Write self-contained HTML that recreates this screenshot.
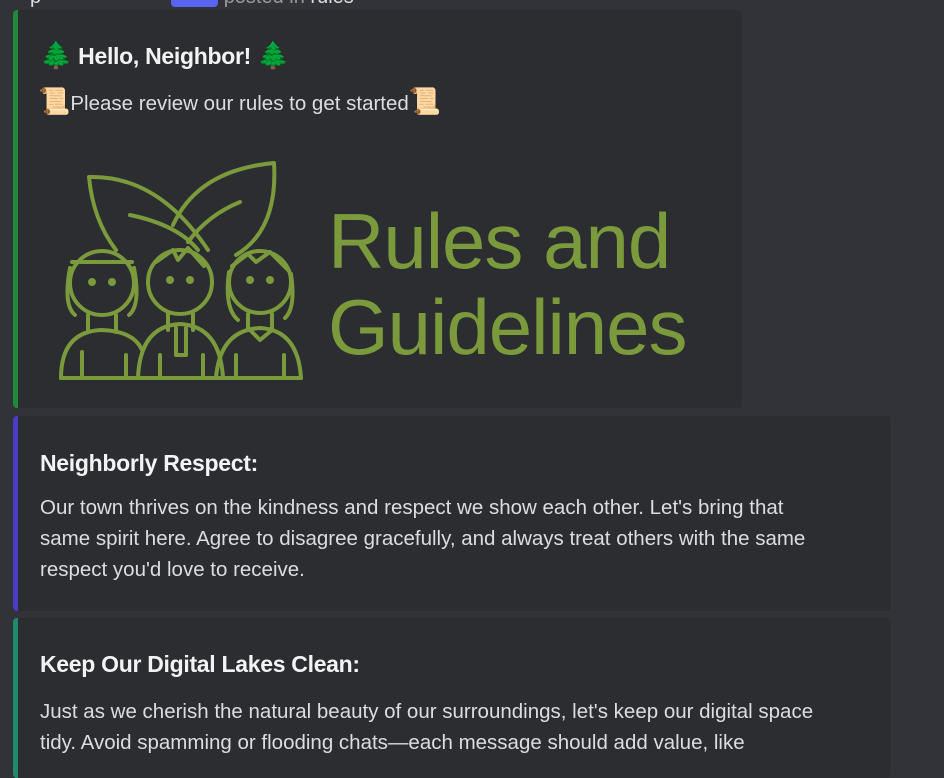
<!DOCTYPE html>
<html><head><meta charset="utf-8"><style>
body{margin:0;width:944px;height:743px;overflow:hidden;background:#313338;font-family:"Liberation Sans",sans-serif;color:#dbdee1;position:relative}
.embed{position:absolute;left:13px;background:#2b2d31;border-radius:4px;border-left:5px solid #1f8b3a;box-sizing:border-box}
.t{color:#f2f3f5;font-weight:bold;font-size:23px;position:absolute;left:22px;letter-spacing:-0.3px}
.d{position:absolute;left:22px;font-size:20.5px;line-height:31px;color:#dbdee1;width:790px}
.big{position:absolute;left:310px;color:#7a9a3c;font-size:78px;line-height:86px;letter-spacing:-1px}
.e{font-size:26px}
</style></head><body>
<div style="position:absolute;left:30px;top:-14px;font-size:20px;color:#dbdee1">p<span style="display:inline-block;width:130px"></span><span style="background:#5865f2;border-radius:4px;display:inline-block;width:47px;height:18px;vertical-align:middle"></span> <span style="color:#999">posted in</span> rules</div>
<div class="embed" style="top:10px;width:729px;height:398px">
 <div class="t" style="top:30px"><span class="e">🌲</span> Hello, Neighbor! <span class="e">🌲</span></div>
 <div class="d" style="top:76px;color:#dbdee1;left:20px"><span class="e">📜</span>Please review our rules to get started<span class="e">📜</span></div>
 <svg style="position:absolute;left:30px;top:140px" width="260" height="235" viewBox="40 140 260 235" fill="none" stroke="#7a9a3c" stroke-width="4" stroke-linecap="round" stroke-linejoin="round">
  <path d="M81 167 Q150 165 200 240 M81 167 Q85 210 108 240"/>
  <path d="M266 153 Q190 160 165 215 M266 153 Q270 220 228 245"/>
  <path d="M122 205 Q170 215 190 240 M232 192 Q200 205 180 232"/>
  <circle cx="94" cy="273" r="32"/><path d="M64 252 H124 M62 258 Q55 295 67 305 M126 258 Q133 295 121 305"/>
  <circle cx="172" cy="272" r="32"/><path d="M148 252 L165 240 L170 250 L180 238 L196 256"/>
  <circle cx="252" cy="272" r="31"/><path d="M224 256 L240 244 L248 252 L262 242 L280 260 M221 262 Q216 298 230 310 M283 264 Q288 298 277 308"/>
  <path d="M53 368 Q53 322 93 320 Q126 321 134 340 M80 305 V322 M108 305 V322"/>
  <path d="M130 368 Q132 316 172 314 Q212 316 215 368 M160 304 V320 M185 304 V320 M168 318 V345 H178 V318"/>
  <path d="M208 368 Q212 320 252 318 Q290 320 293 368 M240 304 V320 M264 304 V320 M242 320 L252 330 L264 320"/>
  <path d="M53 368 H293 M74 342 V368 M118 345 V368 M152 345 V368 M195 345 V368 M228 345 V368 M276 345 V368"/>
  <circle cx="84" cy="272" r="2" fill="#7a9a3c"/><circle cx="104" cy="272" r="2" fill="#7a9a3c"/>
  <circle cx="162" cy="270" r="2" fill="#7a9a3c"/><circle cx="182" cy="270" r="2" fill="#7a9a3c"/>
  <circle cx="242" cy="270" r="2" fill="#7a9a3c"/><circle cx="262" cy="270" r="2" fill="#7a9a3c"/>
 </svg>
 <div class="big" style="top:188px">Rules and</div>
 <div class="big" style="top:274px">Guidelines</div>
</div>
<div class="embed" style="top:416px;width:878px;height:195px;border-left-color:#4a3cc4">
 <div class="t" style="top:34px">Neighborly Respect:</div>
 <div class="d" style="top:76px">Our town thrives on the kindness and respect we show each other. Let's bring that same spirit here. Agree to disagree gracefully, and always treat others with the same respect you'd love to receive.</div>
</div>
<div class="embed" style="top:618px;width:878px;height:160px;border-left-color:#1f8a70">
 <div class="t" style="top:33px">Keep Our Digital Lakes Clean:</div>
 <div class="d" style="top:78px">Just as we cherish the natural beauty of our surroundings, let's keep our digital space tidy. Avoid spamming or flooding chats—each message should add value, like</div>
</div>
</body></html>
